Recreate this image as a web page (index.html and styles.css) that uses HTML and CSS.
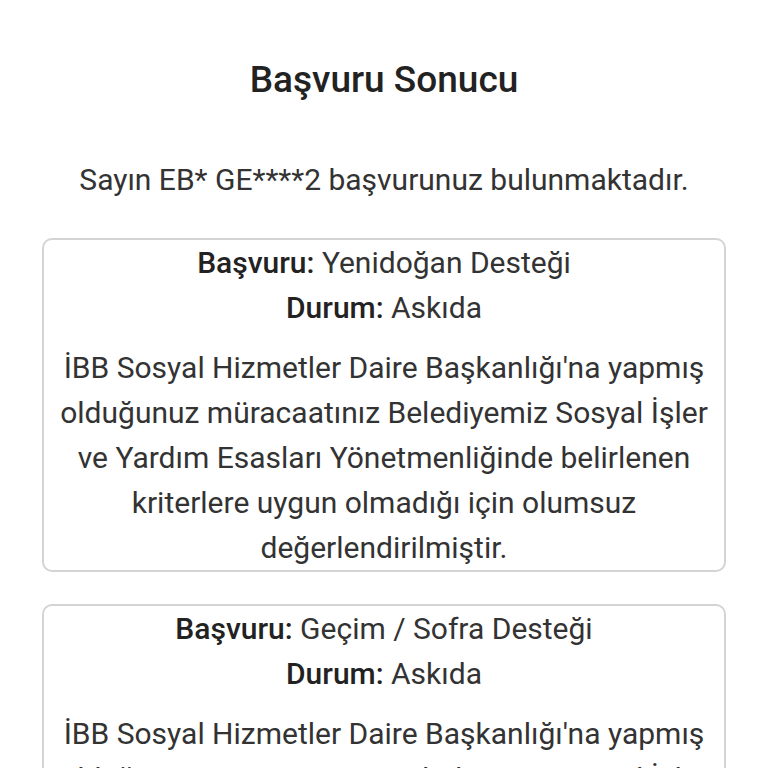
FILE: index.html
```html
<!DOCTYPE html>
<html lang="tr">
<head>
<meta charset="utf-8">
<link rel="stylesheet" href="styles.css">
</head>
<body>
<main class="page">
  <h1 class="title">Başvuru Sonucu</h1>
  <p class="intro">Sayın EB* GE****2 başvurunuz bulunmaktadır.</p>
  <section class="card">
    <div class="row"><b>Başvuru:</b> Yenidoğan Desteği</div>
    <div class="row"><b>Durum:</b> Askıda</div>
    <p class="desc">İBB Sosyal Hizmetler Daire Başkanlığı'na yapmış olduğunuz müracaatınız Belediyemiz Sosyal İşler ve Yardım Esasları Yönetmenliğinde belirlenen kriterlere uygun olmadığı için olumsuz değerlendirilmiştir.</p>
  </section>
  <section class="card">
    <div class="row"><b>Başvuru:</b> Geçim / Sofra Desteği</div>
    <div class="row"><b>Durum:</b> Askıda</div>
    <p class="desc">İBB Sosyal Hizmetler Daire Başkanlığı'na yapmış olduğunuz müracaatınız Belediyemiz Sosyal İşler ve Yardım Esasları Yönetmenliğinde belirlenen kriterlere uygun olmadığı için olumsuz değerlendirilmiştir.</p>
  </section>
</main>
</body>
</html>
```

FILE: styles.css
```css
html, body {
  margin: 0;
  padding: 0;
  background: #ffffff;
}
body {
  font-family: Roboto, "Noto Sans", sans-serif;
  color: #333333;
}
.page {
  padding: 58px 42px 0;
  display: flex;
  flex-direction: column;
  gap: 32px;
}
.title {
  margin: 0;
  font-size: 37px;
  line-height: 44px;
  font-weight: 500;
  text-align: center;
  color: #222;
}
.intro {
  margin: 24px 0 4px;
  font-size: 30px;
  line-height: 44px;
  text-align: center;
  font-weight: 400;
}
.card {
  border: 2px solid #d4d4d4;
  border-radius: 10px;
  padding: 0 16px;
  text-align: center;
  font-size: 30px;
  line-height: 45px;
}
.row b {
  font-weight: 500;
  color: #222;
}
.desc {
  margin: 15px 0 0;
}
```
